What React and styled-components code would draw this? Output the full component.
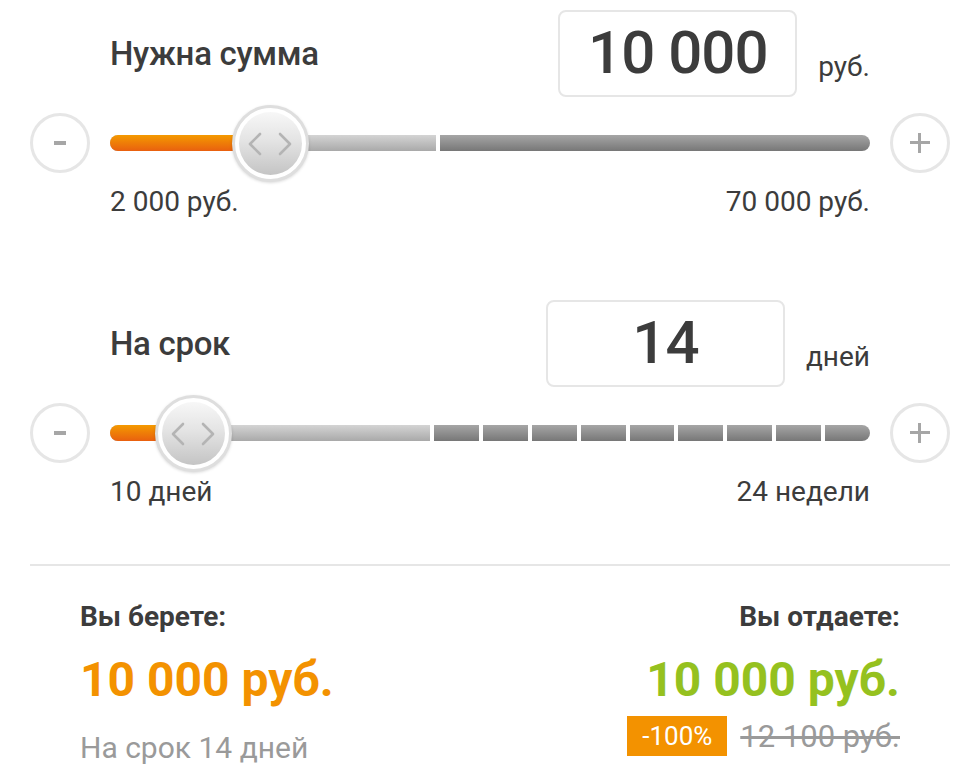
import styled, { createGlobalStyle } from "styled-components";

const GlobalStyle = createGlobalStyle`
  body {
    margin: 0;
    background: #fff;
    font-family: Roboto, "Noto Sans", Arial, sans-serif;
    color: #3c3c3c;
  }
`;

const sliders = [
  {
    title: "Нужна сумма",
    value: "10 000",
    unit: "руб.",
    min: "2 000 руб.",
    max: "70 000 руб.",
    light: 326,
    dark: 1,
    pos: 21,
  },
  {
    title: "На срок",
    value: "14",
    unit: "дней",
    min: "10 дней",
    max: "24 недели",
    light: 320,
    dark: 9,
    pos: 10.9,
  },
];

const Chevrons = () => (
  <svg width="46" height="24" viewBox="0 0 46 24">
    <polyline
      points="13,2 3,12 13,22"
      fill="none"
      stroke="#b4b4b4"
      strokeWidth="2.6"
      strokeLinecap="round"
      strokeLinejoin="round"
    />
    <polyline
      points="33,2 43,12 33,22"
      fill="none"
      stroke="#b4b4b4"
      strokeWidth="2.6"
      strokeLinecap="round"
      strokeLinejoin="round"
    />
  </svg>
);

const Slider = ({ data }) => {
  const segments = Array.from({ length: data.dark });
  return (
    <Block>
      <Header>
        <Title>{data.title}</Title>
        <ValueGroup>
          <ValueBox>{data.value}</ValueBox>
          <Unit>{data.unit}</Unit>
        </ValueGroup>
      </Header>
      <Row>
        <RoundButton>
          <Minus />
        </RoundButton>
        <Track>
          <LightPart $w={data.light} />
          {segments.map((_, i) => (
            <DarkPart key={i} $last={i === segments.length - 1} />
          ))}
          <Fill style={{ width: `${data.pos}%` }} />
          <Thumb style={{ left: `${data.pos}%` }}>
            <ThumbInner>
              <Chevrons />
            </ThumbInner>
          </Thumb>
        </Track>
        <RoundButton>
          <Plus />
        </RoundButton>
      </Row>
      <Limits>
        <span>{data.min}</span>
        <span>{data.max}</span>
      </Limits>
    </Block>
  );
};

const App = () => {
  return (
    <Wrap>
      <GlobalStyle />
      {sliders.map((s) => (
        <Slider key={s.title} data={s} />
      ))}
      <Divider />
      <Results>
        <Column>
          <Caption>Вы берете:</Caption>
          <Amount $color="#f39200">10 000 руб.</Amount>
          <Note>На срок 14 дней</Note>
        </Column>
        <Column $right>
          <Caption>Вы отдаете:</Caption>
          <Amount $color="#95c11f">10 000 руб.</Amount>
          <Discount>
            <Badge>-100%</Badge>
            <OldPrice>12 100 руб.</OldPrice>
          </Discount>
        </Column>
      </Results>
    </Wrap>
  );
};

const Wrap = styled.div`
  width: 920px;
  padding: 10px 30px 0;
`;

const Block = styled.section`
  & + & {
    margin-top: 83px;
  }
`;

const Header = styled.div`
  display: flex;
  align-items: center;
  padding: 0 80px;
`;

const Title = styled.h2`
  flex: 1;
  margin: 0;
  font-size: 33px;
  font-weight: 500;
  letter-spacing: -0.3px;
  color: #3c3c3c;
`;

const ValueGroup = styled.div`
  display: flex;
  align-items: flex-end;
  gap: 21px;
`;

const ValueBox = styled.div`
  box-sizing: border-box;
  width: 239px;
  height: 87px;
  border: 2px solid #e6e6e6;
  border-radius: 8px;
  display: flex;
  align-items: center;
  justify-content: center;
  font-size: 60px;
  font-weight: 500;
  letter-spacing: -1px;
  color: #3c3c3c;
  padding-bottom: 2px;
`;

const Unit = styled.span`
  font-size: 28px;
  line-height: 34px;
  margin-bottom: 13px;
  color: #3c3c3c;
`;

const Row = styled.div`
  display: flex;
  align-items: center;
  gap: 20px;
  height: 60px;
  margin-top: 16px;
`;

const RoundButton = styled.div`
  box-sizing: border-box;
  width: 60px;
  height: 60px;
  flex: 0 0 60px;
  border-radius: 50%;
  border: 3px solid #e6e6e6;
  display: flex;
  align-items: center;
  justify-content: center;
  background: #fff;
`;

const Minus = styled.span`
  width: 12px;
  height: 4px;
  background: #a6a6a6;
`;

const Plus = styled.span`
  position: relative;
  width: 20px;
  height: 20px;
  &::before,
  &::after {
    content: "";
    position: absolute;
    background: #a6a6a6;
  }
  &::before {
    left: 0;
    right: 0;
    top: 8px;
    height: 3px;
  }
  &::after {
    top: 0;
    bottom: 0;
    left: 8px;
    width: 3px;
  }
`;

const Track = styled.div`
  position: relative;
  flex: 1;
  height: 16px;
  display: flex;
  gap: 4px;
`;

const LightPart = styled.div`
  flex: 0 0 ${(p) => p.$w}px;
  background: linear-gradient(#d4d4d4, #a9a9a9);
  border-radius: 8px 0 0 8px;
`;

const DarkPart = styled.div`
  flex: 1;
  background: linear-gradient(#a6a6a6, #777);
  border-radius: ${(p) => (p.$last ? "0 8px 8px 0" : "0")};
`;

const Fill = styled.div`
  position: absolute;
  left: 0;
  top: 0;
  bottom: 0;
  border-radius: 8px 0 0 8px;
  background: linear-gradient(#f49a00, #e9600f);
`;

const Thumb = styled.div`
  position: absolute;
  top: 50%;
  box-sizing: border-box;
  width: 77px;
  height: 77px;
  margin: -38px 0 0 -38px;
  border-radius: 50%;
  border: 3px solid #dedede;
  background: #fff;
  padding: 4px;
  box-shadow: 0 1px 3px rgba(0, 0, 0, 0.15);
`;

const ThumbInner = styled.div`
  width: 100%;
  height: 100%;
  border-radius: 50%;
  background: linear-gradient(#f7f7f7, #e4e4e4 45%, #c4c4c4);
  display: flex;
  align-items: center;
  justify-content: center;
`;

const Limits = styled.div`
  display: flex;
  justify-content: space-between;
  padding: 0 80px;
  margin-top: 14px;
  font-size: 28px;
  line-height: 30px;
  color: #3c3c3c;
`;

const Divider = styled.hr`
  margin: 57px 0 0;
  border: none;
  height: 2px;
  background: #e6e6e6;
`;

const Results = styled.div`
  display: flex;
  justify-content: space-between;
  padding: 34px 50px 0 50px;
`;

const Column = styled.div`
  display: flex;
  flex-direction: column;
  align-items: ${(p) => (p.$right ? "flex-end" : "flex-start")};
`;

const Caption = styled.div`
  font-size: 28px;
  line-height: 34px;
  font-weight: 700;
  color: #3c3c3c;
`;

const Amount = styled.div`
  margin-top: 18px;
  font-size: 48px;
  line-height: 56px;
  font-weight: 700;
  color: ${(p) => p.$color};
`;

const Note = styled.div`
  margin-top: 22px;
  font-size: 30px;
  line-height: 36px;
  color: #9a9a9a;
`;

const Discount = styled.div`
  display: flex;
  align-items: center;
  gap: 13px;
  margin-top: 8px;
`;

const Badge = styled.span`
  width: 100px;
  height: 40px;
  background: #f39200;
  color: #fff;
  font-size: 26px;
  display: flex;
  align-items: center;
  justify-content: center;
`;

const OldPrice = styled.span`
  font-size: 31px;
  color: #9a9a9a;
  text-decoration: line-through;
`;

export default App;
